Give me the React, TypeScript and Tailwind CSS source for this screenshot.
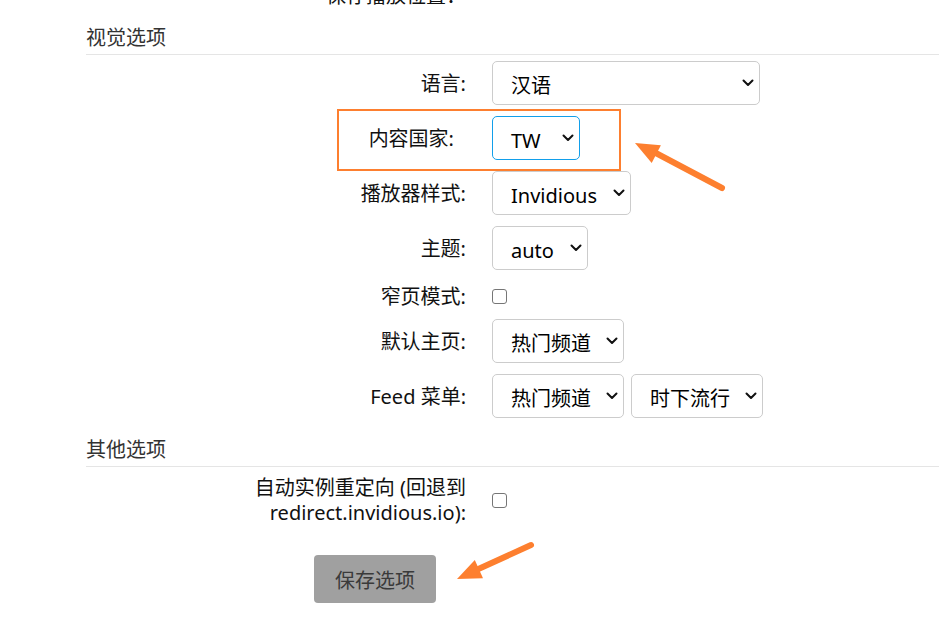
import React from "react";

const font = { fontFamily: '"Noto Sans", "Noto Sans CJK SC", sans-serif' };

function Chevron() {
  return (
    <svg width="12" height="8" viewBox="0 0 12 8" className="shrink-0">
      <path d="M1.5 1.5 L6 6 L10.5 1.5" fill="none" stroke="#111" strokeWidth="2" strokeLinecap="round" strokeLinejoin="round" />
    </svg>
  );
}

function Select({ value, width, focused }: { value: string; width: string; focused?: boolean }) {
  return (
    <div
      className={`${width} h-[44px] flex items-center justify-between pl-[18px] pr-[5px] rounded-[5px] border bg-white text-[20px] text-black ${
        focused ? "border-[#129fea]" : "border-[#cccccc]"
      }`}
    >
      <span className="leading-none mt-[6px]">{value}</span>
      <Chevron />
    </div>
  );
}

function Checkbox() {
  return <div className="w-[15px] h-[15px] rounded-[3px] border border-[#767676] bg-white" />;
}

function Row({
  label,
  children,
  className = "",
  labelClass = "",
}: {
  label: React.ReactNode;
  children: React.ReactNode;
  className?: string;
  labelClass?: string;
}) {
  return (
    <div className={`flex items-center ${className}`}>
      <label className={`w-[380px] text-right text-[20px] leading-[25px] text-[#111] ${labelClass}`}>{label}</label>
      <div className="ml-[26px] flex gap-[7px] items-center">{children}</div>
    </div>
  );
}

function Heading({ title, className = "" }: { title: string; className?: string }) {
  return (
    <div className={`h-[30px] pb-[5px] border-b border-[#e5e5e5] text-[20px] leading-[25px] text-[#333] ${className}`}>
      {title}
    </div>
  );
}

export default function App() {
  return (
    <div className="relative w-[939px] h-[620px] overflow-hidden bg-white" style={font}>
      <div className="pl-[86px]">
        <Row label="保存播放位置：" className="h-[25px] -mt-[17px]">
          <span />
        </Row>

        <Heading title="视觉选项" className="mt-[17px]" />

        <Row label="语言:" className="h-[44px] mt-[6px]">
          <Select value="汉语" width="w-[268px]" />
        </Row>
        <Row label="内容国家:" className="h-[44px] mt-[11px]" labelClass="pr-[12px]">
          <Select value="TW" width="w-[88px]" focused />
        </Row>
        <Row label="播放器样式:" className="h-[44px] mt-[11px]">
          <Select value="Invidious" width="w-[139px]" />
        </Row>
        <Row label="主题:" className="h-[44px] mt-[11px]">
          <Select value="auto" width="w-[96px]" />
        </Row>
        <Row label="窄页模式:" className="h-[30px] mt-[11px]">
          <Checkbox />
        </Row>
        <Row label="默认主页:" className="h-[44px] mt-[8px]">
          <Select value="热门频道" width="w-[132px]" />
        </Row>
        <Row label="Feed 菜单:" className="h-[44px] mt-[11px]">
          <Select value="热门频道" width="w-[132px]" />
          <Select value="时下流行" width="w-[132px]" />
        </Row>

        <Heading title="其他选项" className="mt-[19px]" />

        <div className="flex items-center mt-[8px]">
          <label className="ml-[150px] w-[230px] text-right text-[20px] leading-[25px] text-[#111]">
            自动实例重定向 (回退到
            <br />
            redirect.invidious.io):
          </label>
          <div className="ml-[26px]">
            <Checkbox />
          </div>
        </div>

        <button className="mt-[30px] ml-[228px] w-[122px] h-[48px] pt-[4px] rounded-[4px] bg-[#a0a0a0] text-[20px] text-[#3a3a3a]">
          保存选项
        </button>
      </div>

      {/* annotations */}
      <div className="absolute left-[337px] top-[109px] w-[284px] h-[62px] border-2 border-[#fd7f2f] pointer-events-none" />
      <svg className="absolute inset-0 pointer-events-none" width="939" height="620">
        <line x1="722" y1="188" x2="652" y2="151" stroke="#fd7f2f" strokeWidth="6" strokeLinecap="round" />
        <polygon points="635,143 660.9,145.2 651.7,163" fill="#fd7f2f" />
        <line x1="531" y1="545" x2="474" y2="571" stroke="#fd7f2f" strokeWidth="6" strokeLinecap="round" />
        <polygon points="457,579 483,578.2 474.8,560" fill="#fd7f2f" />
      </svg>
    </div>
  );
}
